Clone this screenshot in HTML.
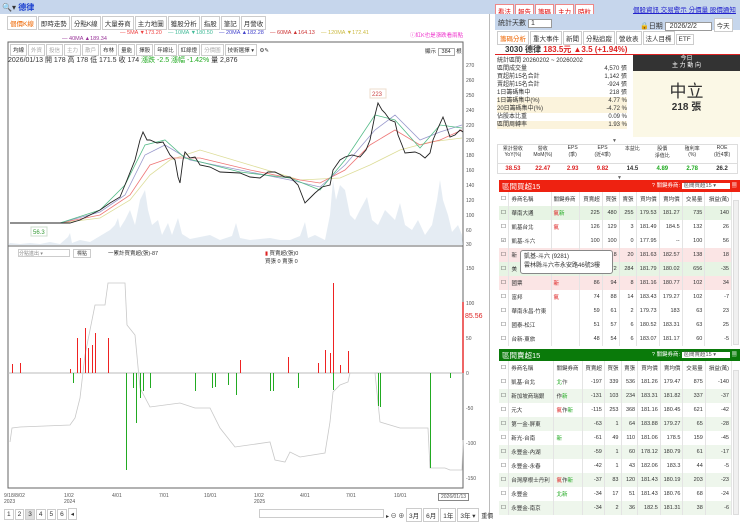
<!DOCTYPE html><html><head><meta charset="utf-8"><style>
*{margin:0;padding:0;box-sizing:border-box}
body{width:740px;height:519px;overflow:hidden;background:#fff;font-family:"Liberation Sans","Noto Sans CJK TC",sans-serif;font-size:7px;color:#333;position:relative}
.a{position:absolute}
.tab{display:inline-block;border:1px solid #ccc;padding:1px 2px;margin-right:1px;background:#fff;font-size:6.5px}
table{border-collapse:collapse;width:100%}
td{font-size:5.5px;padding:0 2px;border-right:1px solid #e4e4e4;height:14px;text-align:right;white-space:nowrap}
td.l{text-align:left}
</style></head><body>
<div class="a" style="left:0;top:0;width:740px;height:14px;background:#c6d6ec"></div>
<div class="a" style="left:2px;top:2px;font-size:8px;color:#333">🔍▾ <b style="color:#1a3fcf">德律</b></div>
<div class="a" style="left:495px;top:4px;font-size:6.5px">
<span class="tab" style="color:#d00;border-color:#e88">看法</span><span class="tab" style="color:#d00;border-color:#e88">報告</span><span class="tab" style="color:#d00;border-color:#e88">籌碼</span><span class="tab" style="color:#d00;border-color:#e88">主力</span><span class="tab" style="color:#d00;border-color:#e88">時粒</span></div>
<div class="a" style="left:633px;top:4px;font-size:6.5px;color:#22c;text-decoration:underline">個股資訊 交易警示 分價量 股價通知</div>
<div class="a" style="left:0;top:14px;width:490px;height:505px;border-right:1px solid #bbb"></div>
<div class="a" style="left:7px;top:16px">
<span class="tab" style="color:#e60">個價K線</span><span class="tab">即時走勢</span><span class="tab">分點K線</span><span class="tab">大量券商</span><span class="tab">主力地圖</span><span class="tab">獲股分析</span><span class="tab">指股</span><span class="tab">筆記</span><span class="tab">月營收</span></div>
<div class="a" style="left:120px;top:30px;font-size:5.5px;white-space:nowrap"><span style="color:#e44">— 5MA ▼173.20</span> &nbsp;&nbsp; <span style="color:#4b9">— 10MA ▼180.50</span> &nbsp;&nbsp; <span style="color:#44c">— 20MA ▲182.28</span> &nbsp;&nbsp; <span style="color:#c33">— 60MA ▲164.13</span> &nbsp;&nbsp; <span style="color:#cb4">— 120MA ▼172.41</span></div>
<div class="a" style="left:62px;top:36px;font-size:5.5px;color:#939">— 40MA ▲189.34</div>
<div class="a" style="left:410px;top:31px;font-size:5.5px;color:#e3c">ⓘ紅K也是漲跌看兩點</div>
<div class="a" style="left:10px;top:44px;font-size:5.5px;white-space:nowrap"><span class="tab" style="font-size:5.5px">均線</span><span class="tab" style="font-size:5.5px;color:#aaa">外資</span><span class="tab" style="font-size:5.5px;color:#aaa">投信</span><span class="tab" style="font-size:5.5px;color:#aaa">主力</span><span class="tab" style="font-size:5.5px;color:#aaa">散戶</span><span class="tab" style="font-size:5.5px">布林</span><span class="tab" style="font-size:5.5px">量能</span><span class="tab" style="font-size:5.5px">擇股</span><span class="tab" style="font-size:5.5px">年線比</span><span class="tab" style="font-size:5.5px">紅綠燈</span><span class="tab" style="font-size:5.5px;color:#aaa">分價圖</span><span class="tab" style="font-size:5.5px">技術選擇 ▾</span> ⚙✎</div>
<div class="a" style="left:8px;top:55px;font-size:7px;white-space:nowrap">2026/01/13 開 178 高 178 低 171.5 收 174 <span style="color:#2a2">漲跌 -2.5 漲幅 -1.42%</span> 量 2,876</div>
<div class="a" style="left:425px;top:47px;font-size:5.5px">顯示 <span style="border:1px solid #aaa;padding:0 3px">384</span> 根</div>
<svg class="a" style="left:0;top:40px" width="490" height="450">
<rect x="8" y="2" width="455" height="446" fill="none" stroke="#666"/>
<line x1="8" y1="206" x2="463" y2="206" stroke="#666"/>
<polygon fill="#d3dfeb" opacity=".6" points="8,205 10,203 20,204 30,203 40,204 50,202 60,204 68,197 70,193 72,203 80,200 90,202 100,196 110,190 115,185 118,178 120,188 125,180 130,170 135,185 140,160 145,150 148,170 152,185 158,180 162,195 168,183 172,195 178,178 182,194 190,199 200,197 210,195 220,200 232,196 236,183 240,198 250,200 260,199 270,198 280,200 290,200 300,196 305,182 308,198 315,195 325,200 330,175 333,140 336,160 340,145 345,150 350,175 355,180 360,170 367,157 372,180 378,185 385,170 395,180 400,163 405,185 412,190 418,180 425,195 432,185 437,160 440,140 443,160 448,175 452,192 458,185 462,195 463,205"/>
<polyline fill="none" stroke="#dd9" stroke-width=".8" points="10,183 60,183 100,178 130,160 150,135 170,120 200,110 250,125 300,140 340,138 370,125 400,110 430,102 462,98"/>
<polyline fill="none" stroke="#e77" stroke-width=".8" points="10,183 60,183 100,175 130,155 150,125 170,118 200,118 250,130 300,140 320,143 345,130 370,105 395,90 420,105 440,100 462,90"/>
<polyline fill="none" stroke="#99c" stroke-width=".8" points="10,183 60,183 100,172 125,155 145,115 165,105 190,120 240,130 290,140 320,147 345,125 375,90 395,75 420,100 440,92 462,85"/>
<polyline fill="none" stroke="#5b8" stroke-width=".8" points="10,183 60,183 100,170 125,145 145,105 165,100 185,118 240,132 290,138 320,150 345,120 375,75 395,80 420,108 440,85 462,88"/>
<polyline fill="none" stroke="#222" stroke-width=".9" points="10,183 70,183 80,180 100,170 110,163 120,157 127,140 135,120 140,100 143,92 147,100 150,100 157,103 163,102 170,115 175,120 178,137 180,143 183,120 185,112 190,118 195,117 200,125 210,127 220,132 240,133 250,137 260,138 268,132 275,132 285,137 290,137 298,145 305,163 310,158 315,153 322,147 330,145 333,130 340,120 345,117 352,115 360,117 366,110 370,100 375,75 378,63 382,70 385,73 390,80 395,82 398,95 402,105 405,113 415,112 420,114 425,118 430,113 433,100 438,88 443,77 446,85 450,97 455,95 460,90 463,92"/>
<rect x="31" y="187" width="16" height="9" fill="#fff" stroke="#cdc"/><text x="33" y="194" font-size="6" fill="#393">56.3</text>
<rect x="370" y="49" width="16" height="9" fill="#fff" stroke="#edc"/><text x="372" y="56" font-size="6" fill="#c44">223</text>
<g font-size="5" fill="#555"><text x="466" y="27">270</text><text x="466" y="42">260</text><text x="466" y="57">250</text><text x="466" y="72">240</text><text x="466" y="87">220</text><text x="466" y="102">200</text><text x="466" y="117">180</text><text x="466" y="132">160</text><text x="466" y="147">140</text><text x="466" y="162">120</text><text x="466" y="177">100</text><text x="466" y="192">60</text><text x="466" y="206">30</text><text x="466" y="230">150</text><text x="466" y="265">100</text><text x="466" y="300">50</text><text x="466" y="335">0</text><text x="466" y="370">-50</text><text x="466" y="405">-100</text><text x="466" y="440">-150</text></g>
<text x="465" y="278" font-size="7" fill="#d22">85.56</text>
<line x1="8" y1="333" x2="463" y2="333" stroke="#bbb"/>
<polyline fill="none" stroke="#c8c8c8" stroke-width=".8" points="10,402 12,388 20,387 70,385 75,378 80,358 85,315 95,265 105,265 108,243 125,243 127,285 135,295 140,348 150,367 180,363 195,368 210,368 220,388 235,407 270,402 275,420 285,422 290,412 300,417 325,413 330,382 333,352 340,345 348,342 350,333 375,333 380,382 400,388 428,388 430,428 445,428 450,430 462,430 463,400"/>
<g fill="#e22"><path d="M12 333h1v-9h-1zM20 333h1v-10h-1zM70 333h1v-4h-1zM77 333h1v-35h-1zM80 333h1v-15h-1zM85 333h1v-45h-1zM88 333h1v-25h-1zM92 333h1v-28h-1zM95 333h1v-40h-1zM108 333h1v-35h-1zM240 333h1v-13h-1zM288 333h1v-16h-1zM318 333h1v-10h-1zM325 333h1v-23h-1zM330 333h1v-20h-1zM333 333h1v-90h-1zM340 333h1v-8h-1zM348 333h1v-22h-1z"/><rect x="462" y="262" width="2" height="71" fill="#e66"/></g>
<g fill="#2a2"><path d="M73 333h1v10h-1zM126 333h1v97h-1zM133 333h1v15h-1zM136 333h1v50h-1zM140 333h1v25h-1zM143 333h1v18h-1zM150 333h1v15h-1zM195 333h1v18h-1zM212 333h1v15h-1zM215 333h1v14h-1zM228 333h1v12h-1zM236 333h1v22h-1zM270 333h1v18h-1zM273 333h1v18h-1zM298 333h1v15h-1zM333 333h1v17h-1zM378 333h1v33h-1zM380 333h1v34h-1zM430 333h1v95h-1zM450 333h1v5h-1z"/></g>
</svg>
<div class="a" style="left:18px;top:249px;width:52px;height:8px;border:1px solid #ccc;font-size:5px;color:#888">分點進出 ▾</div>
<div class="a" style="left:73px;top:249px;font-size:5px;border:1px solid #ccc;padding:0 3px">標點</div>
<div class="a" style="left:108px;top:249px;font-size:5.5px">一累計買賣超(張)-87</div>
<div class="a" style="left:265px;top:249px;font-size:5.5px"><span style="color:#d22">▮</span> 買賣超(張)0<br>買張 0 賣張 0</div>
<div class="a" style="left:4px;top:493px;font-size:5px;color:#555;white-space:nowrap;width:480px">
<span class="a" style="left:0">9/18/8/02<br>2023</span><span class="a" style="left:60px">1/02<br>2024</span><span class="a" style="left:108px">4/01</span><span class="a" style="left:155px">7/01</span><span class="a" style="left:200px">10/01</span><span class="a" style="left:250px">1/02<br>2025</span><span class="a" style="left:296px">4/01</span><span class="a" style="left:342px">7/01</span><span class="a" style="left:390px">10/01</span><span class="a" style="left:434px;border:1px solid #888;padding:0 2px;background:#fff">2026/01/13</span></div>
<div class="a" style="left:4px;top:508px;font-size:6px"><span class="tab">1</span><span class="tab">2</span><span class="tab" style="background:#ddd">3</span><span class="tab">4</span><span class="tab">5</span><span class="tab">6</span><span class="tab">◂</span></div>
<div class="a" style="left:259px;top:509px;width:125px;height:9px;border:1px solid #ccc"></div>
<div class="a" style="left:386px;top:508px;font-size:6px;white-space:nowrap">▸ ⊖ ⊕ <span class="tab">3月</span><span class="tab">6月</span><span class="tab">1年</span><span class="tab">3年 ▾</span> 重價</div>
<div class="a" style="left:495px;top:14px;width:245px;height:16px;background:#c6d6ec"></div>
<div class="a" style="left:498px;top:18px;font-size:7px">統計天數 <span style="border:1px solid #999;background:#fff;padding:0 16px 0 2px">1</span></div>
<div class="a" style="left:640px;top:18px;font-size:7px">🔒日期 <span style="border:1px solid #999;background:#fff;padding:0 4px">2026/2/2 &nbsp;&nbsp;&nbsp;&nbsp;</span> <span class="tab">今天</span></div>
<div class="a" style="left:497px;top:31px;font-size:6px"><span class="tab" style="color:#e60">籌碼分析</span><span class="tab">重大事件</span><span class="tab">新聞</span><span class="tab">分點追蹤</span><span class="tab">營收表</span><span class="tab">法人目標</span><span class="tab">ETF</span></div>
<div class="a" style="left:495px;top:42px;width:245px;height:13px;border-bottom:1px solid #d22;font-size:8px;padding:2px 0 0 10px"><b>3030 德律</b> <b style="color:#d22">183.5元 ▲3.5 (+1.94%)</b></div>
<div class="a" style="left:497px;top:57px;width:130px;font-size:6px;line-height:8px">統計區間 20260202 ~ 20260202
<div style="position:relative">區間成交量<span style="float:right">4,570 張</span></div><div>買超前15名合計<span style="float:right">1,142 張</span></div><div>賣超前15名合計<span style="float:right">-924 張</span></div><div>1日籌碼集中<span style="float:right">218 張</span></div><div style="background:#fbf3dc">1日籌碼集中(%)<span style="float:right">4.77 %</span></div><div style="background:#fbf3dc">20日籌碼集中(%)<span style="float:right">-4.72 %</span></div><div>佔股本比重<span style="float:right">0.09 %</span></div><div style="background:#fbf3dc">區間周轉率<span style="float:right">1.93 %</span></div></div>
<div class="a" style="left:633px;top:55px;width:107px;height:82px;background:#fbf8e6"></div>
<div class="a" style="left:633px;top:55px;width:107px;height:16px;background:#333;color:#fff;font-size:6px;text-align:center;line-height:7px;padding-top:1px">今日<br>主 力 動 向</div>
<div class="a" style="left:633px;top:77px;width:107px;text-align:center;font-size:17px;color:#333">中立</div>
<div class="a" style="left:633px;top:98px;width:107px;text-align:center;font-size:10px;font-weight:bold">218 張</div>
<div class="a" style="left:612px;top:138px;font-size:5px;color:#666">▼</div>
<div class="a" style="left:497px;top:144px;width:241px;height:30px;border:1px solid #ddd;font-size:5px;text-align:center">
<div style="display:flex;height:19px;border-bottom:1px solid #ddd">
<span style="flex:1">累計營收<br>YoY(%)</span><span style="flex:1">營收<br>MoM(%)</span><span style="flex:1">EPS<br>(季)</span><span style="flex:1">EPS<br>(近4季)</span><span style="flex:1">本益比</span><span style="flex:1">股價<br>淨值比</span><span style="flex:1">殖利率<br>(%)</span><span style="flex:1">ROE<br>(近4季)</span></div>
<div style="display:flex;font-size:6px;font-weight:bold;padding-top:2px"><span style="flex:1;color:#d22">38.53</span><span style="flex:1;color:#d22">22.47</span><span style="flex:1;color:#d22">2.93</span><span style="flex:1;color:#d22">9.82</span><span style="flex:1">14.5</span><span style="flex:1;color:#2a2">4.89</span><span style="flex:1;color:#2a2">2.78</span><span style="flex:1">26.2</span></div></div>
<div class="a" style="left:617px;top:175px;font-size:5px;color:#666">▼</div>
<div class="a" style="left:499px;top:180px;width:241px;height:12px;background:#e21;color:#fff;font-size:7.5px;padding:1px 3px">區間買超15<span style="float:right;font-size:5.5px">? 關鍵券商: <span style="background:#fff;color:#555;padding:0 14px 0 2px">區間買超15 ▾</span> ▦</span></div>
<div class="a" style="left:499px;top:192px;width:233px">
<table>
<tr style="height:10px"><td class="l">☐</td><td class="l">券商名稱</td><td class="l">關鍵券商</td><td>買賣超</td><td>買張</td><td>賣張</td><td>買均價</td><td>賣均價</td><td>交易量</td><td>損益(萬)</td></tr>
<tr style="background:#e7f4e4"><td class="l">☐</td><td class="l">華南大通</td><td class="l" style="color:#d22">氣<span style="color:#2a2">新</span></td><td>225</td><td>480</td><td>255</td><td>179.53</td><td>181.27</td><td>735</td><td>140</td></tr>
<tr><td class="l">☐</td><td class="l">凱基台北</td><td class="l" style="color:#d22">氣</td><td>126</td><td>129</td><td>3</td><td>181.49</td><td>184.5</td><td>132</td><td>26</td></tr>
<tr><td class="l">☑</td><td class="l">凱基-斗六</td><td class="l"></td><td>100</td><td>100</td><td>0</td><td>177.95</td><td>--</td><td>100</td><td>56</td></tr>
<tr style="background:#fbe5e5"><td class="l">☐</td><td class="l">新</td><td class="l"></td><td>98</td><td>118</td><td>20</td><td>181.63</td><td>182.57</td><td>138</td><td>18</td></tr>
<tr style="background:#e7f4e4"><td class="l">☐</td><td class="l">美</td><td class="l"></td><td>88</td><td>372</td><td>284</td><td>181.79</td><td>180.02</td><td>656</td><td>-35</td></tr>
<tr style="background:#fbe5e5"><td class="l">☐</td><td class="l">國票</td><td class="l" style="color:#d22">新</td><td>86</td><td>94</td><td>8</td><td>181.16</td><td>180.77</td><td>102</td><td>34</td></tr>
<tr><td class="l">☐</td><td class="l">富邦</td><td class="l" style="color:#d22">氣</td><td>74</td><td>88</td><td>14</td><td>183.43</td><td>179.27</td><td>102</td><td>-7</td></tr>
<tr><td class="l">☐</td><td class="l">華南永昌-竹東</td><td class="l"></td><td>59</td><td>61</td><td>2</td><td>179.73</td><td>183</td><td>63</td><td>23</td></tr>
<tr><td class="l">☐</td><td class="l">國泰-松江</td><td class="l"></td><td>51</td><td>57</td><td>6</td><td>180.52</td><td>183.31</td><td>63</td><td>25</td></tr>
<tr><td class="l">☐</td><td class="l">台新-東旅</td><td class="l"></td><td>48</td><td>54</td><td>6</td><td>183.07</td><td>181.17</td><td>60</td><td>-5</td></tr>
</table></div>
<div class="a" style="left:520px;top:250px;width:93px;height:24px;border:1px solid #888;border-radius:3px;background:#fff;font-size:6px;padding:2px 3px;line-height:9px">凱基-斗六 (9281)<br>雲林縣斗六市永安路46號3樓</div>
<div class="a" style="left:733px;top:200px;width:6px;height:145px;background:#f0f0f0;border:1px solid #ddd"></div>
<div class="a" style="left:499px;top:349px;width:241px;height:12px;background:#0a7a0a;color:#fff;font-size:7.5px;padding:1px 3px">區間賣超15<span style="float:right;font-size:5.5px">? 關鍵券商: <span style="background:#fff;color:#555;padding:0 14px 0 2px">區間賣超15 ▾</span> ▦</span></div>
<div class="a" style="left:499px;top:361px;width:233px">
<table>
<tr style="height:10px"><td class="l">☐</td><td class="l">券商名稱</td><td class="l">關鍵券商</td><td>買賣超</td><td>買張</td><td>賣張</td><td>買均價</td><td>賣均價</td><td>交易量</td><td>損益(萬)</td></tr>
<tr><td class="l">☐</td><td class="l">凱基-台北</td><td class="l" style="color:#2a2">北<span style="color:#555">作</span></td><td>-197</td><td>339</td><td>536</td><td>181.26</td><td>179.47</td><td>875</td><td>-140</td></tr>
<tr style="background:#eef6ec"><td class="l">☐</td><td class="l">新加坡商瑞銀</td><td class="l">作<span style="color:#2a2">新</span></td><td>-131</td><td>103</td><td>234</td><td>183.31</td><td>181.82</td><td>337</td><td>-37</td></tr>
<tr><td class="l">☐</td><td class="l">元大</td><td class="l"><span style="color:#d22">氣</span>作<span style="color:#2a2">新</span></td><td>-115</td><td>253</td><td>368</td><td>181.16</td><td>180.45</td><td>621</td><td>-42</td></tr>
<tr style="background:#eef6ec"><td class="l">☐</td><td class="l">第一金-屏東</td><td class="l"></td><td>-63</td><td>1</td><td>64</td><td>183.88</td><td>179.27</td><td>65</td><td>-28</td></tr>
<tr><td class="l">☐</td><td class="l">新光-台南</td><td class="l" style="color:#2a2">新</td><td>-61</td><td>49</td><td>110</td><td>181.06</td><td>178.5</td><td>159</td><td>-45</td></tr>
<tr style="background:#eef6ec"><td class="l">☐</td><td class="l">永豐金-內湖</td><td class="l"></td><td>-59</td><td>1</td><td>60</td><td>178.12</td><td>180.79</td><td>61</td><td>-17</td></tr>
<tr><td class="l">☐</td><td class="l">永豐金-永春</td><td class="l"></td><td>-42</td><td>1</td><td>43</td><td>182.06</td><td>183.3</td><td>44</td><td>-5</td></tr>
<tr style="background:#eef6ec"><td class="l">☐</td><td class="l">台灣摩根士丹利</td><td class="l"><span style="color:#d22">氣</span>作<span style="color:#2a2">新</span></td><td>-37</td><td>83</td><td>120</td><td>181.43</td><td>180.19</td><td>203</td><td>-23</td></tr>
<tr><td class="l">☐</td><td class="l">永豐金</td><td class="l" style="color:#2a2">北新</td><td>-34</td><td>17</td><td>51</td><td>181.43</td><td>180.76</td><td>68</td><td>-24</td></tr>
<tr style="background:#eef6ec"><td class="l">☐</td><td class="l">永豐金-南京</td><td class="l"></td><td>-34</td><td>2</td><td>36</td><td>182.5</td><td>181.31</td><td>38</td><td>-6</td></tr>
</table></div>
<div class="a" style="left:733px;top:370px;width:6px;height:145px;background:#f0f0f0;border:1px solid #ddd"></div>
</body></html>
